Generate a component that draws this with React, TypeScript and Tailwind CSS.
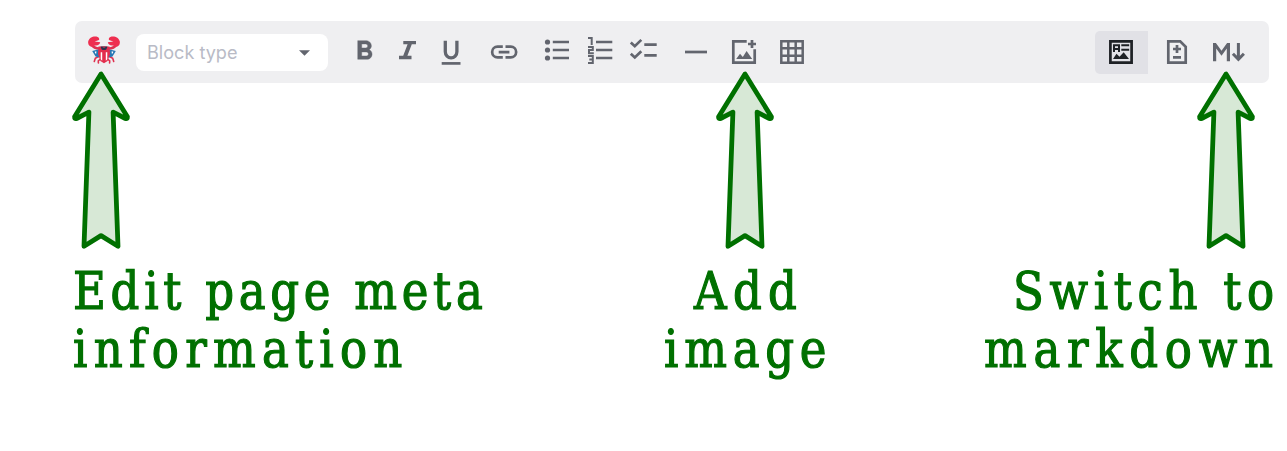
import React from "react";

type IconProps = { children: React.ReactNode; className?: string };

function Icon({ children, className = "" }: IconProps) {
  return (
    <svg
      viewBox="0 0 32 32"
      fill="none"
      stroke="currentColor"
      strokeWidth="2.7"
      className={`block h-8 w-8 shrink-0 overflow-visible ${className}`}
    >
      {children}
    </svg>
  );
}

function Crab() {
  return (
    <svg viewBox="0 0 32 29" className="ml-[13px] mt-[15px] block h-[29px] w-8 shrink-0">
      <g fill="none" stroke="#df3150" strokeWidth="1.6" strokeLinecap="round">
        <path d="M4 9Q6 12.2 11 12.5M28 9Q26 12.2 21 12.5" strokeWidth="2.4" />
        <path d="M10.5 20.5L7.3 22.2L6.3 25.5M21.5 20.5L24.7 22.2L25.7 25.5" />
        <path d="M12.5 23L10.3 24.8L10.4 27M19.5 23L21.7 24.8L21.6 27" />
      </g>
      <path
        fill="#ee2f50"
        d="M4.5 11C1.2 10.6 -.2 8.3.2 5.5C.9 2 4.8 0 8.4.6C10.8 1.1 11.6 2.4 11 4L6.6 5.4L12.2 6.3C12 8.6 9.6 9.9 6.8 9.4Z"
      />
      <path
        fill="#ee2f50"
        d="M27.5 11C30.8 10.6 32.2 8.3 31.8 5.5C31.1 2 27.2 0 23.6.6C21.2 1.1 20.4 2.4 21 4L25.4 5.4L19.8 6.3C20 8.6 22.4 9.9 25.2 9.4Z"
      />
      <path fill="#2878b5" d="M4.2 15L11 13.2V21.4L7.5 20.4ZM27.8 15L21 13.2V21.4L24.5 20.4Z" />
      <path fill="#ffffff" d="M6.7 15.8L8.3 15.2V17.5H7.2ZM25.3 15.8L23.7 15.2V17.5H24.8Z" />
      <path fill="#e32d4d" d="M10.5 10.6H21.5L22 18L19.6 25L16 27.2L12.4 25L10 18Z" />
      <path fill="#ffffff" d="M12.7 16.2H14.2V24.8L12.7 23.2ZM17.8 16.2H19.3V23.2L17.8 24.8Z" />
      <path fill="#26354d" d="M12.5 10.5H19.5L18.3 13.5Q16 14.7 13.7 13.5Z" />
      <path stroke="#ee2f50" strokeWidth=".8" d="M14.8 11.2H17.2" />
    </svg>
  );
}

function Arrow({ className = "" }: { className?: string }) {
  return (
    <svg viewBox="0 0 60 182" className={`block h-[182px] w-[60px] ${className}`}>
      <path
        d="M30 4L3.6 46.8Q3.4 49.2 5.6 48.5L17.9 42.2L13 176.3L30 165.6L47 176.3L42.1 42.2L54.4 48.5Q56.6 49.2 56.4 46.8Z"
        fill="#d7e8d6"
        stroke="#007000"
        strokeWidth="4.8"
        strokeLinejoin="round"
      />
    </svg>
  );
}

function Toolbar() {
  return (
    <div className="ml-[75px] flex h-[62px] w-[1194px] items-start rounded-[7px] bg-[#efeff1] text-[#62656e]">
      <Crab />
      <div className="ml-4 mt-[13px] flex h-[37px] w-48 shrink-0 items-center justify-between rounded-[8px] bg-white pl-[11px] pr-[18px]">
        <span className="font-['Inter',sans-serif] text-[18.1px] leading-[37px] text-[#b9bbc6]">Block type</span>
        <svg viewBox="0 0 11 6" className="block h-[6px] w-[11px]">
          <path d="M0 .2H11L5.5 5.7Z" fill="#62656e" />
        </svg>
      </div>

      <Icon className="ml-5 mt-[15px]">
        <path
          transform="translate(.4 -.7) scale(1.3333)"
          fill="currentColor"
          stroke="currentColor"
          strokeWidth=".3"
          d="M15.6 10.79c.97-.67 1.65-1.77 1.65-2.79 0-2.26-1.75-4-4-4H7v14h7.04c2.09 0 3.71-1.7 3.71-3.79 0-1.52-.86-2.82-2.15-3.42zM10 6.5h3c.83 0 1.5.67 1.5 1.5s-.67 1.5-1.5 1.5h-3v-3zm3.5 9H10v-3h3.5c.83 0 1.5.67 1.5 1.5s-.67 1.5-1.5 1.5z"
        />
      </Icon>
      <Icon className="ml-[11px] mt-[15px]">
        <path fill="currentColor" stroke="none" d="M12.3 4.9H25V8.3H20.8L16.4 19.8H20.5V23.2H8V19.8H12.2L16.6 8.3H12.3Z" />
      </Icon>
      <Icon className="ml-3 mt-[15px]">
        <path d="M10.3 4.7V15.8A5.8 6 0 0 0 21.9 15.8V4.7" strokeWidth="3.3" />
        <path d="M6.7 27.4H25.5" />
      </Icon>
      <Icon className="ml-[21px] mt-[15px]">
        <path d="M14.8 10.7H9.5A5.35 5.35 0 0 0 9.5 21.4H14.8M17.5 10.7H22.8A5.35 5.35 0 0 1 22.8 21.4H17.5M10.7 16.05H21.4" />
      </Icon>
      <Icon className="ml-[21px] mt-[15px]">
        <g fill="currentColor" stroke="none">
          <circle cx="6.5" cy="6" r="2.6" />
          <circle cx="6.5" cy="14" r="2.6" />
          <circle cx="6.5" cy="22" r="2.6" />
        </g>
        <path d="M11.8 6H28M11.8 14H28M11.8 22H28" />
      </Icon>
      <Icon className="ml-[11px] mt-[15px]">
        <path d="M12 6H28.3M12 14H28.3M12 22H28.3" />
        <path d="M4 1.9H7.7V9M4 11H8.8V14H5V17.2H9.8M4 20H8.8V27H4M5.3 23.5H8.8" strokeWidth="2" />
      </Icon>
      <Icon className="ml-[11px] mt-[15px]">
        <path d="M3.8 6.4L7.8 10.2L14.3 3.9M3.8 17.7L7.8 21.5L14.3 15.2" />
        <path d="M17.3 8.6H29.7M17.3 19.3H29.7" />
      </Icon>
      <Icon className="ml-[21px] mt-[15px]">
        <path d="M5 16H27" />
      </Icon>
      <Icon className="ml-4 mt-[15px]">
        <path d="M18.7 5.3H5.3V26.7H26.7V13.2M20 8H28M24 4V12" />
        <path fill="currentColor" stroke="none" d="M8.2 23L12 17.8L14.8 21L18.6 15.1L24.2 23Z" />
      </Icon>
      <Icon className="ml-4 mt-[15px]">
        <path d="M5.3 5.3H26.7V26.7H5.3ZM12.3 5V27M19.7 5V27M5 12.3H27M5 19.7H27" strokeWidth="2.5" />
      </Icon>

      <div className="ml-[287px] mt-[10px] flex h-[43px] w-[53px] shrink-0 rounded-l-[5px] bg-[#e1e1e6] pl-[10px] pt-[5px] text-[#1e2125]">
        <Icon>
          <path d="M5.4 5.4H26.6V26.6H5.4Z" />
          <path d="M9 16V9.2H14V16M9 13H14M16.3 9.2H24.2M16.3 13.8H24.2" strokeWidth="2" />
          <path fill="currentColor" stroke="none" d="M8 23L11.5 17.8L14.5 20.8L18.7 16.2L24 23Z" />
        </Icon>
      </div>
      <Icon className="ml-[13px] mt-[15px]">
        <path d="M7.3 5.3H19.2L24.7 10.8V26.7H7.3ZM12 13H20M16 9V17M12 21.3H20" />
      </Icon>
      <Icon className="ml-5 mt-[15px]">
        <path fill="currentColor" stroke="none" d="M0 25.3V7H2.9L8.5 14.7L14.1 7H17V25.3H13.8V12.4L8.5 19.7L3.2 12.4V25.3Z" />
        <path d="M25.4 7V23.2M19.9 17.8L25.4 23.3L30.9 17.8" strokeWidth="3" />
      </Icon>
    </div>
  );
}

const captionLine =
  "block w-max origin-left scale-x-[0.945] whitespace-pre font-['DejaVu_Serif_Condensed','DejaVu_Serif',serif] text-[53px] leading-[58px] text-[#007000] [font-stretch:condensed] [-webkit-text-stroke:1.2px_#007000]";

export default function App() {
  return (
    <main className="h-[451px] w-[1287px] overflow-hidden bg-white pt-[21px]">
      <Toolbar />
      <div className="relative -mt-[13px] flex">
        <Arrow className="ml-[71px]" />
        <Arrow className="ml-[584px]" />
        <Arrow className="ml-[421px]" />
      </div>
      <div className="mt-[10px] flex h-[120px] items-start">
        <div className="ml-[73px] w-[420px] shrink-0">
          <span className={`${captionLine} tracking-[5px]`}>Edit page meta</span>
          <span className={`${captionLine} tracking-[6.6px]`}>information</span>
        </div>
        <div className="ml-[171px] w-[170px] shrink-0">
          <span className={`${captionLine} ml-[30px] tracking-[6.7px]`}>Add</span>
          <span className={`${captionLine} tracking-[6.1px]`}>image</span>
        </div>
        <div className="ml-[150px] w-[300px] shrink-0">
          <span className={`${captionLine} ml-[29px] tracking-[6px]`}>Switch to</span>
          <span className={`${captionLine} tracking-[7.1px]`}>markdown</span>
        </div>
      </div>
    </main>
  );
}
